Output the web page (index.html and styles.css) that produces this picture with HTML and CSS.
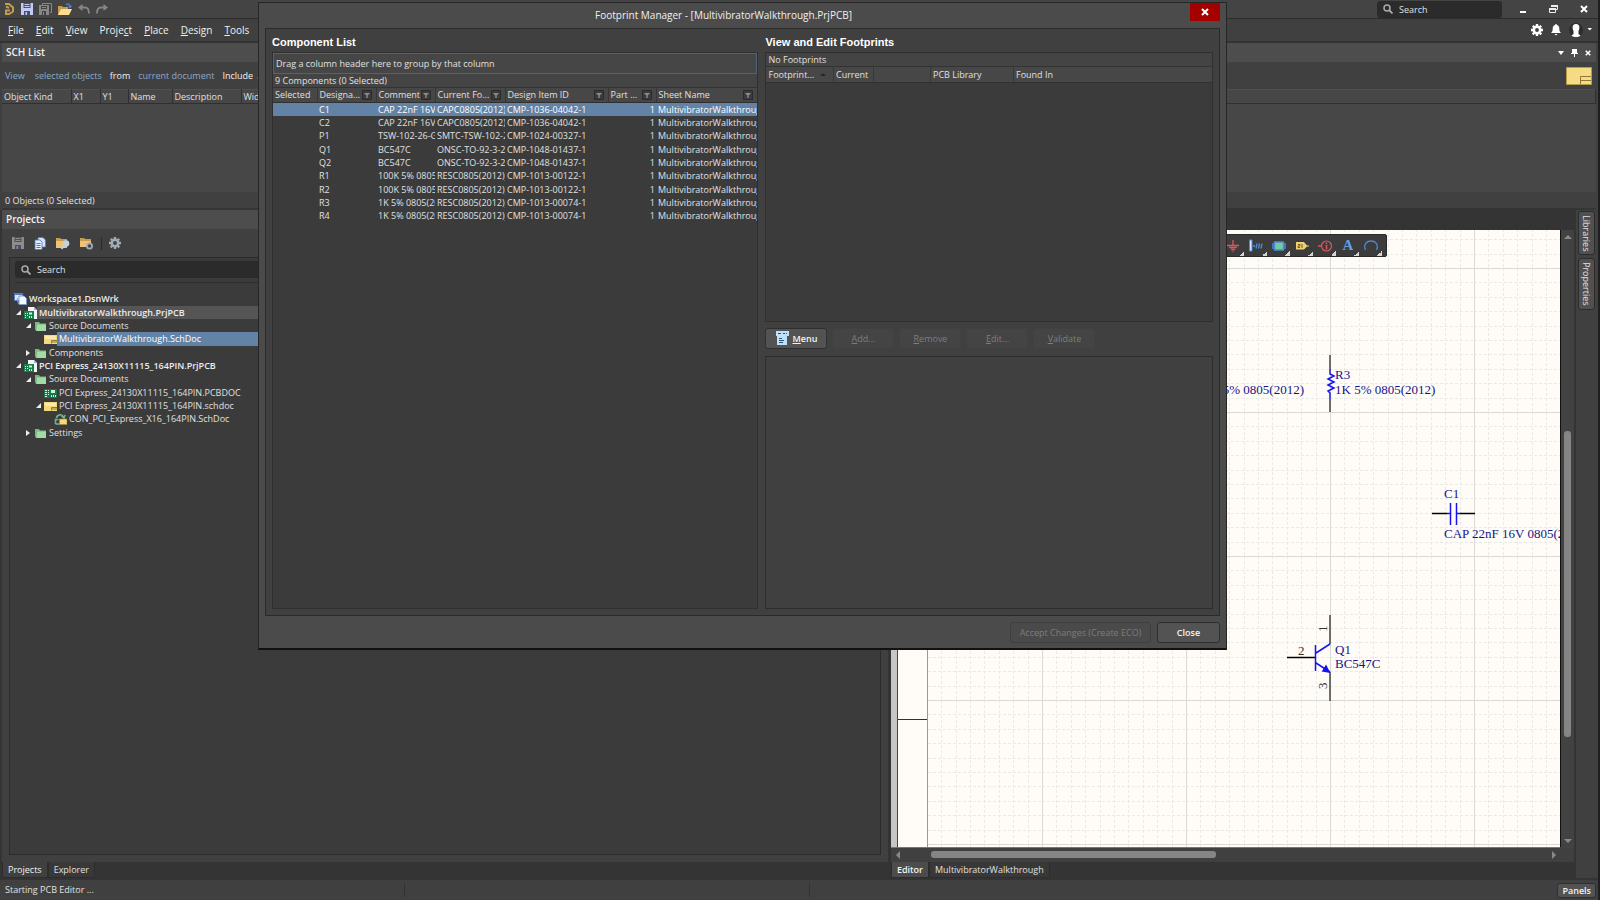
FILE: index.html
```html
<!DOCTYPE html>
<html lang="en">
<head>
<meta charset="utf-8">
<title>Footprint Manager - [MultivibratorWalkthrough.PrjPCB]</title>
<link rel="stylesheet" href="styles.css">
</head>
<body>
<svg class="defs" aria-hidden="true">
  <symbol id="i-save" viewBox="0 0 12 12"><path fill="currentColor" d="M0 0h12v12H0z"/><path class="cut" d="M2.500 0h7v5h-7zM3 8h6v4H3z"/><path fill="currentColor" d="M3.500 1h5v1h-5zM3.500 3h5v1h-5zM4.500 9h1.500v3H4.500z"/></symbol>
  <symbol id="i-search" viewBox="0 0 10 10"><circle cx="4" cy="4" r="3" fill="none" stroke="#a8a8a8" stroke-width="1.500"/><path d="M6 6l3.500 3.500" stroke="#a8a8a8" stroke-width="1.800"/></symbol>
  <symbol id="i-gear" viewBox="0 0 12 12"><circle cx="6" cy="6" r="3.200" fill="none" stroke="currentColor" stroke-width="2.600"/><path stroke="currentColor" stroke-width="2.400" stroke-dasharray="2 8" d="M6 0v12M0 6h12M1.800 1.800l8.500 8.500M10.200 1.800l-8.500 8.500"/></symbol>
  <symbol id="i-folder" viewBox="0 0 13 12"><path fill="#79b97f" d="M1 2h4l1 1.500h6V11H2L1 9z"/><path fill="#a2dba4" d="M3 4.500h9V11H2.500z"/></symbol>
  <symbol id="i-sheet" viewBox="0 0 13 12"><path fill="#f3d97c" d="M0 2h13v9H0z"/><path fill="#fae9a9" d="M1 3h11v3H1z"/><path fill="none" stroke="#8f7a35" d="M7.500 10.500v-3H13M8 9h5"/></symbol>
  <symbol id="i-project" viewBox="0 0 13 12"><path fill="#f2f4fa" d="M4 0h6l3 3v9H4z"/><path fill="#9db3df" d="M10 0v3h3z"/><path fill="#16824a" d="M0 4h10v8H0z"/><path fill="#d5f2dd" d="M1 6h1v1H1zM1 8h1v1H1zM1 10h1v1H1zM3 6h1v1H3zM3 8h1v1H3zM5 5.500h3v2H5zM5 9h1v2H5zM7 9h1v2H7z"/></symbol>
  <symbol id="i-pcb" viewBox="0 0 13 12"><path fill="#117a49" d="M0 2h13v9H0z"/><path fill="#d5f2dd" d="M1 3h2v1H1zM1 5h2v1H1zM1 7h2v1H1zM1 9h2v1H1zM4 3h1v1H4zM4 5h1v1H4zM4 7h1v1H4zM7 3h4v3H7zM7 8h1v2H7zM9 8h1v2H9zM11 8h1v2h-1z"/></symbol>
  <symbol id="i-filter" viewBox="0 0 10 10"><path fill="#3a3a3a" stroke="#2a2a2a" d="M.5.500h9v9h-9z"/><path fill="#8c8c8c" d="M2.500 3h5v1L5.700 5.200V8H4.300V5.200L2.500 4z"/></symbol>
  <symbol id="i-x" viewBox="0 0 8 8"><path stroke="currentColor" stroke-width="2" d="M1 1l6 6M7 1L1 7"/></symbol>
</svg>

<header class="titlebar">
  <div class="quick">
    <svg width="12" height="12" viewBox="0 0 12 12" role="img" aria-label="Altium"><path fill="none" stroke="#c09b52" stroke-width="2" d="M2 1h4l4 3.500v4L6 11H3V7.500h4M3 3.500L6 5"/></svg>
    <button class="save" aria-label="Save"><svg width="12" height="12"><use href="#i-save"/></svg></button>
    <button class="grey" aria-label="Save all"><svg width="13" height="12" viewBox="0 0 13 12"><path fill="none" stroke="#888" d="M3.500 2V.500h9v9H11"/><path fill="#888" d="M0 2h10v10H0z"/><path fill="#444" d="M2 3h6v3H2zM3 8h4v4H3z"/><path fill="#888" d="M3 4h4v1H3zM4 9h1v3H4z"/></svg></button>
    <button aria-label="Open"><svg width="14" height="13" viewBox="0 0 14 13"><path fill="#c99b4c" d="M0 3h4l1 1h5v8H0z"/><path fill="#ffdc93" d="M3 6h11l-3 6H0z"/><path fill="none" stroke="#4d86c4" stroke-width="1.300" d="M8 2c2-2 4-1 4 2M10.500 3L12 4.500 13.500 3"/></svg></button>
    <button aria-label="Undo"><svg width="12" height="10" viewBox="0 0 12 10"><path fill="none" stroke="#858585" stroke-width="1.800" d="M2 3.500h5c3 0 4 2 4 6"/><path fill="#858585" d="M0 3.500L4.500 0v7z"/></svg></button>
    <button aria-label="Redo"><svg width="12" height="10" viewBox="0 0 12 10"><path fill="none" stroke="#858585" stroke-width="1.800" d="M10 3.500H5c-3 0-4 2-4 6"/><path fill="#858585" d="M12 3.500L7.500 0v7z"/></svg></button>
  </div>
  <label class="search top-search"><svg width="10" height="10"><use href="#i-search"/></svg><input type="text" placeholder="Search" aria-label="Search"></label>
  <div class="winbtns">
    <button aria-label="Minimize"><svg width="8" height="8"><path fill="#fff" d="M1 6h6v2H1z"/></svg></button>
    <button aria-label="Restore"><svg width="9" height="8" viewBox="0 0 9 8"><path fill="none" stroke="#eee" d="M2.500 2V.500h6v4H7M.5 3.500h6v4h-6z"/><path fill="#eee" d="M2 0h7v2H2zM0 3h7v2H0z"/></svg></button>
    <button aria-label="Close window"><svg width="8" height="8"><use href="#i-x"/></svg></button>
  </div>
</header>

<nav class="menubar">
  <div class="menus">
    <button><u>F</u>ile</button><button><u>E</u>dit</button><button><u>V</u>iew</button><button>Proje<u>c</u>t</button><button><u>P</u>lace</button><button><u>D</u>esign</button><button><u>T</u>ools</button>
  </div>
  <div class="account">
    <button aria-label="Preferences"><svg width="12" height="12"><use href="#i-gear"/></svg></button>
    <button aria-label="Notifications"><svg width="10" height="12" viewBox="0 0 10 12"><path fill="#fff" d="M4.300 0h1.400v1C8 1.500 8.300 3 8.300 5c0 2 .7 3 1.700 4H0c1-1 1.700-2 1.700-4 0-2 .3-3.500 2.600-4zM3.500 10h3L5 11.500z"/></svg></button>
    <button aria-label="Account"><svg width="23" height="14" viewBox="0 0 23 14"><circle cx="7" cy="7" r="7" fill="#2d2d2d"/><path fill="#fff" d="M7 1c4 0 4 4 2.500 7v3l2 1.500c-2 2-7 2-9 0l2-1.500V8C3 5 3 1 7 1z"/><path fill="#fff" d="M18.500 5H23l-2.200 2.500z"/></svg></button>
  </div>
</nav>

<section class="schlist">
  <div class="panelhead">
    <h2>SCH List</h2>
    <div class="panelbtns">
      <button aria-label="Panel options"><svg width="6" height="6"><path fill="#fff" d="M0 1h6L3 5z"/></svg></button>
      <button aria-label="Pin"><svg width="7" height="8"><path fill="#fff" d="M1 0h5v4h1v1H4v3H3V5H0V4h1z"/></svg></button>
      <button aria-label="Close panel"><svg width="6" height="6"><use href="#i-x"/></svg></button>
    </div>
  </div>
  <div class="filterrow">
    <a href="#">View</a><a href="#">selected objects</a><span>from</span><a href="#">current document</a><span>Include</span><a href="#" class="near">all types of objects</a>
    <svg class="bigsheet" width="26" height="18" viewBox="0 0 26 18"><path fill="#f4db84" stroke="#b59b4c" d="M.5.500h25v17H.5z"/><path fill="none" stroke="#8f7a35" d="M14.500 17V9.500H25M15 13.500h10"/></svg>
  </div>
  <table class="objtable">
    <colgroup><col class="o1"><col class="o2"><col class="o3"><col class="o4"><col class="o5"><col></colgroup>
    <thead><tr><th>Object Kind</th><th>X1</th><th>Y1</th><th>Name</th><th>Description</th><th>Width</th></tr></thead>
  </table>
  <div class="objcount">0 Objects (0 Selected)</div>
</section>

<main class="work">
  <section class="projects">
    <div class="projpanel">
      <div class="panelhead"><h2>Projects</h2></div>
      <div class="projtools">
        <button class="grey" aria-label="Save document"><svg width="12" height="12"><use href="#i-save"/></svg></button>
        <button aria-label="Compile"><svg width="12" height="13" viewBox="0 0 12 13"><path fill="#cfe3ff" stroke="#4b79b8" stroke-width=".8" d="M4 .5h5L11.500 3v7H4z"/><path fill="#e6f0ff" stroke="#4b79b8" stroke-width=".8" d="M1 3h5l2 2v7.500H1z"/><path stroke="#4b79b8" d="M2.500 6.500h4M2.500 8.500h4M2.500 10.500h4"/></svg></button>
        <button aria-label="Explore"><svg width="14" height="13" viewBox="0 0 14 13"><path fill="#c99b4c" d="M0 1h4l1 1h6v9H0z"/><path fill="#efc27c" d="M0 4h11v7H0z"/><circle cx="10" cy="6.500" r="3.300" fill="#bcd4e6"/><path stroke="#bcd4e6" stroke-width="1.800" d="M8 9l-2.500 3"/></svg></button>
        <button aria-label="Project options"><svg width="14" height="13" viewBox="0 0 14 13"><path fill="#c99b4c" d="M0 1h4l1 1h6v8H0z"/><path fill="#efc27c" d="M0 4h11v6H0z"/><circle cx="9.500" cy="9" r="2.600" fill="#444" stroke="#9fabb5" stroke-width="1.800"/></svg></button>
        <span class="vsep"></span>
        <button class="steel" aria-label="Settings"><svg width="12" height="12"><use href="#i-gear"/></svg></button>
      </div>
      <div class="treebox">
        <label class="search tree-search"><svg width="10" height="10"><use href="#i-search"/></svg><input type="text" placeholder="Search" aria-label="Search projects"></label>
        <ul class="tree">
          <li class="l0 bold"><svg class="ico" viewBox="0 0 13 12"><path fill="#dce8ff" stroke="#587bbb" d="M.5.500h8v7h-8z"/><path fill="#587bbb" d="M0 0h9v2H0z"/><path fill="#f4f8ff" stroke="#7f9bcd" d="M5 3h5l2.500 2.500v6H5zM3 5l1.500 6"/></svg><span class="lab">Workspace1.DsnWrk</span></li>
          <li class="l1 bold active"><i class="open"></i><svg class="ico"><use href="#i-project"/></svg><span class="lab">MultivibratorWalkthrough.PrjPCB</span></li>
          <li class="l2"><i class="open"></i><svg class="ico"><use href="#i-folder"/></svg><span class="lab">Source Documents</span></li>
          <li class="l3 selected"><i></i><svg class="ico"><use href="#i-sheet"/></svg><span class="lab">MultivibratorWalkthrough.SchDoc</span></li>
          <li class="l2"><i class="shut"></i><svg class="ico"><use href="#i-folder"/></svg><span class="lab">Components</span></li>
          <li class="l1 bold"><i class="open"></i><svg class="ico"><use href="#i-project"/></svg><span class="lab">PCI Express_24130X11115_164PIN.PrjPCB</span></li>
          <li class="l2"><i class="open"></i><svg class="ico"><use href="#i-folder"/></svg><span class="lab">Source Documents</span></li>
          <li class="l3"><i></i><svg class="ico"><use href="#i-pcb"/></svg><span class="lab">PCI Express_24130X11115_164PIN.PCBDOC</span></li>
          <li class="l3"><i class="open"></i><svg class="ico"><use href="#i-sheet"/></svg><span class="lab">PCI Express_24130X11115_164PIN.schdoc</span></li>
          <li class="l4"><i></i><svg class="ico" viewBox="0 0 13 12"><path fill="none" stroke="#6fb58b" stroke-width="1.600" d="M1.500 11V6.500h3M1.500 11h4M2.500 5C3 1.500 8 .5 9.500 4M7.500 3l2.500 2 1-3"/><path fill="#f3d97c" stroke="#a88b3a" stroke-width=".6" d="M5.500 6H13v5.500H5.500z"/></svg><span class="lab">CON_PCI_Express_X16_164PIN.SchDoc</span></li>
          <li class="l2"><i class="shut"></i><svg class="ico"><use href="#i-folder"/></svg><span class="lab">Settings</span></li>
        </ul>
      </div>
    </div>
    <div class="tabs"><button class="tab on">Projects</button><button class="tab">Explorer</button></div>
  </section>

  <section class="editor">
    <div class="doctabs"></div>
    <div class="canvasrow">
      <div class="canvas">
        <svg class="sheet" width="100%" height="100%">
          <defs>
            <pattern id="grid" x="295" y="38" width="144" height="144" patternUnits="userSpaceOnUse">
              <path fill="none" stroke="#e9ebe8" stroke-dasharray="3 2" d="M14.500 0v144M29.500 0v144M43.500 0v144M58.500 0v144M72.500 0v144M86.500 0v144M101.500 0v144M115.500 0v144M130.500 0v144M0 14.500h144M0 29.500h144M0 43.500h144M0 58.500h144M0 72.500h144M0 86.500h144M0 101.500h144M0 115.500h144M0 130.500h144"/>
              <path fill="none" stroke="#d9dad7" d="M.5 0v144M0 .5h144"/>
            </pattern>
          </defs>
          <rect width="100%" height="100%" fill="#fffcf7"/>
          <rect x="36" width="100%" height="100%" fill="url(#grid)"/>
          <rect width="6" height="100%" fill="#c6c6c6"/>
          <rect x="6" width="1" height="100%" fill="#444"/>
          <rect x="36" width="1" height="100%" fill="#999"/>
          <path stroke="#2b3145" d="M7 489.500h29"/>
          <g fill="none" stroke="#444" stroke-width="1.500">
            <path d="M439 125v14M439 169v13M439 385v29M439 442v29"/>
            <path stroke="#000" d="M541 283.500h15M569 283.500h15M396 427.500h28"/>
          </g>
          <g fill="none" stroke="#1414f0" stroke-width="1.500">
            <path d="M439 139v5l4 2-6 3 6 3-6 3 6 3-6 3 2 2v6M556 283.500h3M565 283.500h4M559.500 273v22M565.500 273v22M424.500 415v26M425 423l14-9M425 433l14 9"/>
            <path fill="#1414f0" d="M432 441l3-5 3 6z"/>
          </g>
          <g class="labels">
            <text x="413" y="164" text-anchor="end">100K 5% 0805(2012)</text>
            <text x="444" y="149">R3</text><text x="444" y="164">1K 5% 0805(2012)</text>
            <text x="553" y="268">C1</text><text x="553" y="308">CAP 22nF 16V 0805(2012)</text>
            <text x="444" y="424">Q1</text><text x="444" y="438">BC547C</text>
          </g>
          <g class="pins"><text x="407" y="425">2</text><text transform="translate(436 402) rotate(-90)">1</text><text transform="translate(436 459) rotate(-90)">3</text></g>
        </svg>
        <div class="floatbar">
          <button aria-label="Power port"><svg viewBox="0 0 14 14"><path fill="none" stroke="#e0565a" stroke-width="1.300" d="M7 1v5M1 6.500h12M3 8.500h8M5 10.500h4M6.500 12.500h1"/></svg></button>
          <button aria-label="Bus"><svg viewBox="0 0 14 14"><path fill="#d4e6ff" stroke="#4e8be0" d="M.5 1h2.500v11H.5z"/><path stroke="#4e8be0" stroke-width="1.300" d="M4 7h2M7 9.500l1-5M9.500 9.500l1-5M12 9.500l1-5"/></svg></button>
          <button aria-label="Part"><svg viewBox="0 0 14 14"><path fill="#74cd98" stroke="#4d86dc" stroke-width="1.300" d="M2.500 3h9v8h-9z"/><path stroke="#4d86dc" stroke-width="1.300" d="M0 5h3M0 7h3M0 9h3M11 5h3M11 7h3M11 9h3"/></svg></button>
          <button aria-label="Port"><svg viewBox="0 0 14 14"><path fill="#efd075" d="M1 3h8l3 3.500h2v1h-2L9 10.500H1z"/><path fill="none" stroke="#665018" stroke-width=".9" d="M3 5.500h2v1.500H3v1.500h2M7 5v4"/></svg></button>
          <button aria-label="Directive"><svg viewBox="0 0 14 14"><circle cx="8.500" cy="7" r="5" fill="none" stroke="#e0565a" stroke-width="1.200"/><path stroke="#e0565a" stroke-width="1.500" d="M0 7h4M8.500 3.500v1.500M8.500 6v4.500"/></svg></button>
          <button class="letter" aria-label="Text string">A</button>
          <button aria-label="Arc"><svg viewBox="0 0 14 14"><path fill="none" stroke="#4e86c8" stroke-width="1.300" d="M1.500 11C-1 5 3 2 7 2s8 3 5.500 9"/></svg></button>
        </div>
      </div>
      <div class="vscroll"><i class="up"></i><span class="thumb"></span><i class="down"></i></div>
    </div>
    <div class="hscroll"><i class="left"></i><span class="thumb"></span><i class="right"></i></div>
    <div class="tabs"><button class="tab on strong">Editor</button><button class="tab">MultivibratorWalkthrough</button></div>
  </section>

  <aside class="sidetabs"><button>Libraries</button><button>Properties</button></aside>
</main>

<footer class="statusbar"><span>Starting PCB Editor ...</span><span></span><span></span><button class="btn">Panels</button></footer>

<div class="dialog" role="dialog" aria-labelledby="dlg-title">
  <div class="dlghead"><h1 id="dlg-title">Footprint Manager - [MultivibratorWalkthrough.PrjPCB]</h1><button class="dlgclose" aria-label="Close dialog"><svg width="8" height="8"><use href="#i-x"/></svg></button></div>
  <div class="dlgbody">
    <section class="complist">
      <h3>Component List</h3>
      <div class="gridbox">
        <div class="groupbar">Drag a column header here to group by that column</div>
        <div class="count">9 Components (0 Selected)</div>
        <table class="comps">
          <colgroup><col class="c1"><col class="c2"><col class="c2"><col class="c4"><col class="c5"><col class="c6"><col></colgroup>
          <thead><tr>
            <th>Selected</th>
            <th><div><span>Designa...</span><svg><use href="#i-filter"/></svg></div></th>
            <th><div><span>Comment</span><svg><use href="#i-filter"/></svg></div></th>
            <th><div><span>Current Fo...</span><svg><use href="#i-filter"/></svg></div></th>
            <th><div><span>Design Item ID</span><svg><use href="#i-filter"/></svg></div></th>
            <th><div><span>Part ...</span><svg><use href="#i-filter"/></svg></div></th>
            <th><div><span>Sheet Name</span><svg><use href="#i-filter"/></svg></div></th>
          </tr></thead>
          <tbody>
            <tr class="sel"><td></td><td>C1</td><td>CAP 22nF 16V 0805(2012)</td><td>CAPC0805(2012)</td><td>CMP-1036-04042-1</td><td>1</td><td>MultivibratorWalkthrough.SchDoc</td></tr>
            <tr><td></td><td>C2</td><td>CAP 22nF 16V 0805(2012)</td><td>CAPC0805(2012)</td><td>CMP-1036-04042-1</td><td>1</td><td>MultivibratorWalkthrough.SchDoc</td></tr>
            <tr><td></td><td>P1</td><td>TSW-102-26-G-S</td><td>SMTC-TSW-102-26</td><td>CMP-1024-00327-1</td><td>1</td><td>MultivibratorWalkthrough.SchDoc</td></tr>
            <tr><td></td><td>Q1</td><td>BC547C</td><td>ONSC-TO-92-3-29-11</td><td>CMP-1048-01437-1</td><td>1</td><td>MultivibratorWalkthrough.SchDoc</td></tr>
            <tr><td></td><td>Q2</td><td>BC547C</td><td>ONSC-TO-92-3-29-11</td><td>CMP-1048-01437-1</td><td>1</td><td>MultivibratorWalkthrough.SchDoc</td></tr>
            <tr><td></td><td>R1</td><td>100K 5% 0805(2012)</td><td>RESC0805(2012)_L</td><td>CMP-1013-00122-1</td><td>1</td><td>MultivibratorWalkthrough.SchDoc</td></tr>
            <tr><td></td><td>R2</td><td>100K 5% 0805(2012)</td><td>RESC0805(2012)_L</td><td>CMP-1013-00122-1</td><td>1</td><td>MultivibratorWalkthrough.SchDoc</td></tr>
            <tr><td></td><td>R3</td><td>1K 5% 0805(2012)</td><td>RESC0805(2012)_L</td><td>CMP-1013-00074-1</td><td>1</td><td>MultivibratorWalkthrough.SchDoc</td></tr>
            <tr><td></td><td>R4</td><td>1K 5% 0805(2012)</td><td>RESC0805(2012)_L</td><td>CMP-1013-00074-1</td><td>1</td><td>MultivibratorWalkthrough.SchDoc</td></tr>
          </tbody>
        </table>
      </div>
    </section>
    <section class="footprints">
      <h3>View and Edit Footprints</h3>
      <div class="gridbox fplist">
        <div class="count">No Footprints</div>
        <table class="fps">
          <colgroup><col class="f1"><col class="f2"><col class="f3"><col class="f4"><col></colgroup>
          <thead><tr><th><div><span>Footprint...</span><i class="sort"></i></div></th><th>Current</th><th></th><th>PCB Library</th><th>Found In</th></tr></thead>
        </table>
      </div>
      <div class="actions">
        <button class="btn"><svg width="13" height="14" viewBox="0 0 13 14"><path fill="#bfe0fb" d="M0 0h13v5h-2v9H1V5H0z"/><path stroke="#24517f" d="M2 2.500h3M7 2.500h2M10 2.500h1M3 7.500h3M3 9.500h5M3 11.500h4"/></svg><span><u>M</u>enu</span></button>
        <button class="btn" disabled><span><u>A</u>dd...</span></button>
        <button class="btn" disabled><span><u>R</u>emove</span></button>
        <button class="btn" disabled><span><u>E</u>dit...</span></button>
        <button class="btn" disabled><span><u>V</u>alidate</span></button>
      </div>
      <div class="preview"></div>
    </section>
  </div>
  <div class="dlgfoot"><button class="btn eco" disabled>Accept Changes (Create ECO)</button><button class="btn close">Close</button></div>
</div>
</body>
</html>
```
FILE: styles.css
```css
* { box-sizing: border-box; }
body {
  margin: 0;
  height: 100vh;
  overflow: hidden;
  position: relative;
  display: flex;
  flex-direction: column;
  background: #404040;
  border-right: 2px solid #1f1f1f;
  color: #e0e0e0;
  font: 500 9px/13px "Open Sans", "Noto Sans", sans-serif;
}
h1, h2, h3, ul { margin: 0; padding: 0; font-weight: 500; }
ul { list-style: none; }
button, input { font: inherit; color: inherit; background: none; border: 0; padding: 0; margin: 0; }
button { display: flex; align-items: center; justify-content: center; white-space: nowrap; }
a { color: #8ba9c6; text-decoration: none; }
svg { display: block; flex: none; }
table { border-collapse: collapse; table-layout: fixed; width: 100%; }
th { font-weight: 500; text-align: left; }
th, td { padding: 0 2px; white-space: nowrap; overflow: hidden; }
.defs { position: absolute; width: 0; height: 0; }

/* Title bar */
.titlebar { height: 19px; flex: none; display: flex; align-items: center; background: #444; border-bottom: 1px solid #2c2c2c; }
.quick { display: flex; align-items: center; gap: 6px; padding-left: 3px; flex: 1; }
.save { color: #c3c8f4; }
.grey { color: #8c8c8c; }
.cut { fill: #4d4f63; }
.search { display: flex; align-items: center; gap: 6px; background: #2b2b2b; border-radius: 3px; }
.search input { flex: 1; min-width: 0; outline: 0; }
.search input::placeholder { color: #e0e0e0; opacity: 1; }
.top-search { width: 125px; height: 17px; padding: 0 6px; }
.winbtns { display: flex; gap: 22px; padding: 0 10px 0 17px; color: #fff; }

/* Menu bar */
.menubar { height: 24px; flex: none; display: flex; align-items: center; justify-content: space-between; border-bottom: 2px solid #333; font-size: 10px; color: #f0f0f0; }
.menus { display: flex; gap: 12px; padding-left: 8px; }
.account { display: flex; gap: 8px; padding-right: 6px; color: #fff; }

/* SCH List panel */
.schlist { height: 167px; flex: none; margin: 0 2px; display: flex; flex-direction: column; border-bottom: 2px solid #353535; background: linear-gradient(#404040 46px, #474747 46px, #474747 149px, #404040 149px); }
.panelhead { height: 19px; flex: none; display: flex; align-items: center; justify-content: space-between; background: #4d4d4d; padding: 0 5px 0 4px; }
.panelhead h2 { font-size: 10px; font-weight: 600; color: #f0f0f0; }
.panelbtns { display: flex; align-items: center; gap: 7px; color: #fff; }
.filterrow { height: 27px; flex: none; display: flex; align-items: center; gap: 8px; padding: 0 4px 0 3px; color: #f0f0f0; }
.filterrow a:first-child { margin-right: 2px; }
.near { margin-left: -4px; }
.bigsheet { margin-left: auto; }
.objtable { border-top: 1px solid #505050; }
.objtable th { height: 14px; border-bottom: 1px solid #303030; border-right: 1px solid #303030; }
.o1 { width: 69px; } .o2 { width: 29px; } .o3 { width: 28px; } .o4 { width: 44px; } .o5 { width: 69px; }
.objcount { margin-top: auto; padding: 0 3px 1px; }

/* Workspace below */
.work { flex: 1; min-height: 0; display: flex; background: #343434; padding-left: 2px; }
.projects { flex: 1; min-width: 0; display: flex; flex-direction: column; }
.projpanel { flex: 1; min-height: 0; display: flex; flex-direction: column; background: #404040; padding-bottom: 7px; }
.projtools { height: 28px; flex: none; display: flex; align-items: center; gap: 10px; padding-left: 10px; }
.vsep { width: 1px; height: 13px; background: #2a2a2a; margin: 0 -3px; }
.steel { color: #9fabb5; }
.treebox { flex: 1; margin: 0 7px; background: #3b3b3b; border: 1px solid #2b2b2b; padding: 3px 0 0 5px; }
.tree-search { height: 17px; padding: 0 5px; border: 1px solid #292929; }
.tree { border-top: 1px solid #2e2e2e; margin-top: 4px; padding-top: 9px; }
.tree li { height: 13px; display: flex; align-items: center; margin-left: -2px; }
.tree li:nth-child(3n + 1) { height: 14px; }
.tree .l2 { padding-left: 10px; } .tree .l3 { padding-left: 20px; } .tree .l4 { padding-left: 30px; }
.tree i { width: 10px; flex: none; display: flex; justify-content: center; }
.tree .open::after { content: ""; border-left: 5px solid transparent; border-bottom: 5px solid #eee; }
.tree .shut::after { content: ""; border: 3px solid transparent; border-left: 4px solid #eee; border-right: 0; }
.ico { width: 13px; height: 12px; margin-left: 1px; }
.lab { flex: 1; height: 100%; padding-left: 2px; white-space: nowrap; }
.bold .lab { font-weight: 600; color: #ececec; }
.active .lab { background: #555; }
.selected .lab { background: #6283a6; color: #fff; }
.tabs { height: 18px; flex: none; display: flex; align-items: flex-start; }
.tab { height: 16px; padding: 0 5px; background: #383838; border: 1px solid #2d2d2d; border-top: 0; }
.tab.on { background: #404040; color: #f4f4f4; }
.tab.strong { background: #4c4c4c; font-weight: 600; }

/* Schematic editor */
.editor { width: 42.8%; flex: none; display: flex; flex-direction: column; margin-left: 3px; }
.doctabs { height: 20px; flex: none; }
.canvasrow { flex: 1; min-height: 0; display: flex; }
.canvas { flex: 1; position: relative; overflow: hidden; border-right: 1px solid #111; border-bottom: 1px solid #777; }
.labels, .pins { font: 13px "Liberation Serif", serif; fill: #14148c; }
.pins { fill: #333; }
.floatbar { position: absolute; left: 327px; top: 4px; display: flex; gap: 1px; padding: 0 4px 0 3px; background: #3c3c3c; border: 1px solid #2a2a2a; border-radius: 2px; }
.floatbar button { width: 22px; height: 21px; background: linear-gradient(135deg, transparent 50%, #d5d5d5 50%) right bottom / 5px 5px no-repeat; }
.floatbar svg { width: 14px; height: 14px; }
.floatbar .letter { font: bold 15px "Liberation Serif", serif; color: #5f9fe8; }
.vscroll { width: 13px; flex: none; display: flex; flex-direction: column; align-items: center; justify-content: space-between; padding: 5px 0; background: #424242; }
.vscroll .thumb { width: 7px; height: 306px; margin-top: 192px; margin-bottom: auto; border-radius: 3px; background: #858585; }
.vscroll .up { border: 4px solid transparent; border-bottom-color: #8a8a8a; border-top: 0; }
.vscroll .down { border: 4px solid transparent; border-top-color: #8a8a8a; border-bottom: 0; }
.hscroll { height: 14px; flex: none; display: flex; align-items: center; padding: 0 18px 1px 5px; background: #404040; }
.hscroll .thumb { width: 285px; height: 7px; margin-left: 31px; margin-right: auto; border-radius: 3px; background: #858585; }
.hscroll .left { border: 4px solid transparent; border-right-color: #8a8a8a; border-left: 0; }
.hscroll .right { border: 4px solid transparent; border-left-color: #8a8a8a; border-right: 0; }
.sidetabs { width: 22px; flex: none; display: flex; flex-direction: column; gap: 3px; margin: 0 0 2px 2px; padding: 1px 3px 0 2px; background: #404040; }
.sidetabs button { writing-mode: vertical-rl; padding: 3px 0; background: #505050; border: 1px solid #2c2c2c; border-radius: 3px; }

/* Status bar */
.statusbar { height: 20px; flex: none; display: flex; align-items: center; background: #404040; padding: 2px 2px 2px 0; }
.statusbar span { flex: 0 0 405px; padding-left: 5px; border-right: 1px solid #323232; height: 14px; }
.statusbar span:last-of-type { border: 0; }
.statusbar .btn { margin-left: auto; height: 15px; padding: 0 4px; font-weight: 600; }
.btn { gap: 4px; background: #535353; border: 1px solid #2f2f2f; border-radius: 3px; color: #f2f2f2; font-weight: 600; }
.btn:disabled { color: #7d7d7d; background: #444; border-color: #414141; font-weight: 500; }

/* Footprint Manager dialog */
.dialog { position: absolute; left: 258px; right: 371px; top: 2px; height: 648px; display: flex; flex-direction: column; padding: 0 6px 5px; background: #4b4b4b; border: 1px solid #262626; border-bottom: 2px solid #111; }
.dlghead { height: 25px; flex: none; display: flex; align-items: flex-start; }
.dlghead h1 { flex: 1; padding: 6px 8px 0 0; text-align: center; font-size: 10px; color: #f0f0f0; }
.dlgclose { width: 30px; height: 18px; background: #a40000; color: #fff; }
.dlgbody { flex: 1; min-height: 0; display: flex; gap: 7px; padding: 6px; background: #404040; border: 1px solid #2a2a2a; }
.complist { flex: 487; min-width: 0; display: flex; flex-direction: column; }
.footprints { flex: 448; min-width: 0; display: flex; flex-direction: column; }
h3 { height: 17px; flex: none; font: bold 11px/14px "Liberation Sans", Arial, sans-serif; color: #fff; }
.gridbox { flex: 1; background: #3b3b3b; border: 1px solid #2f2f2f; }
.groupbar { height: 21px; padding: 3px 2px; background: #464646; border: 1px solid #4f6379; }
.count { height: 14px; padding: 0 2px; background: #444; border-bottom: 1px solid #333; }
.comps th, .fps th { height: 15px; background: #474747; border-bottom: 1px solid #303030; }
.comps th { height: 14px; line-height: 12px; }
.comps th + th, .fps th + th { border-left: 1px solid #383838; }
.comps th div, .fps th div { display: flex; align-items: center; justify-content: space-between; }
.comps th svg { width: 10px; height: 10px; margin-right: 2px; }
.comps td { height: 13px; line-height: 13px; padding: 0 0 0 2px; }
.comps tr:nth-child(3n + 1) td { height: 14px; }
.comps td:nth-child(6) { text-align: right; padding-right: 1px; }
.comps .sel { background: #6283a6; color: #fff; }
.c1 { width: 44px; } .c2 { width: 59px; } .c4 { width: 70px; } .c5 { width: 103px; } .c6 { width: 48px; }
.f1 { width: 67px; } .f2 { width: 40px; } .f3 { width: 57px; } .f4 { width: 83px; }
.sort { border: 3px solid transparent; border-bottom-color: #282828; border-top: 0; margin-right: 5px; }
.fplist { flex: 270; }
.actions { display: flex; gap: 5px; margin: 6px 0 7px; }
.actions .btn { width: 62px; height: 21px; }
.preview { flex: 253; border: 1px solid #2d2d2d; background: #404040; }
.dlgfoot { display: flex; justify-content: flex-end; gap: 6px; padding-top: 6px; }
.dlgfoot .btn { height: 21px; }
.eco { width: 141px; }
.eco:disabled { background: #4a4a4a; border-color: #3e3e3e; }
.close { width: 63px; }
```
